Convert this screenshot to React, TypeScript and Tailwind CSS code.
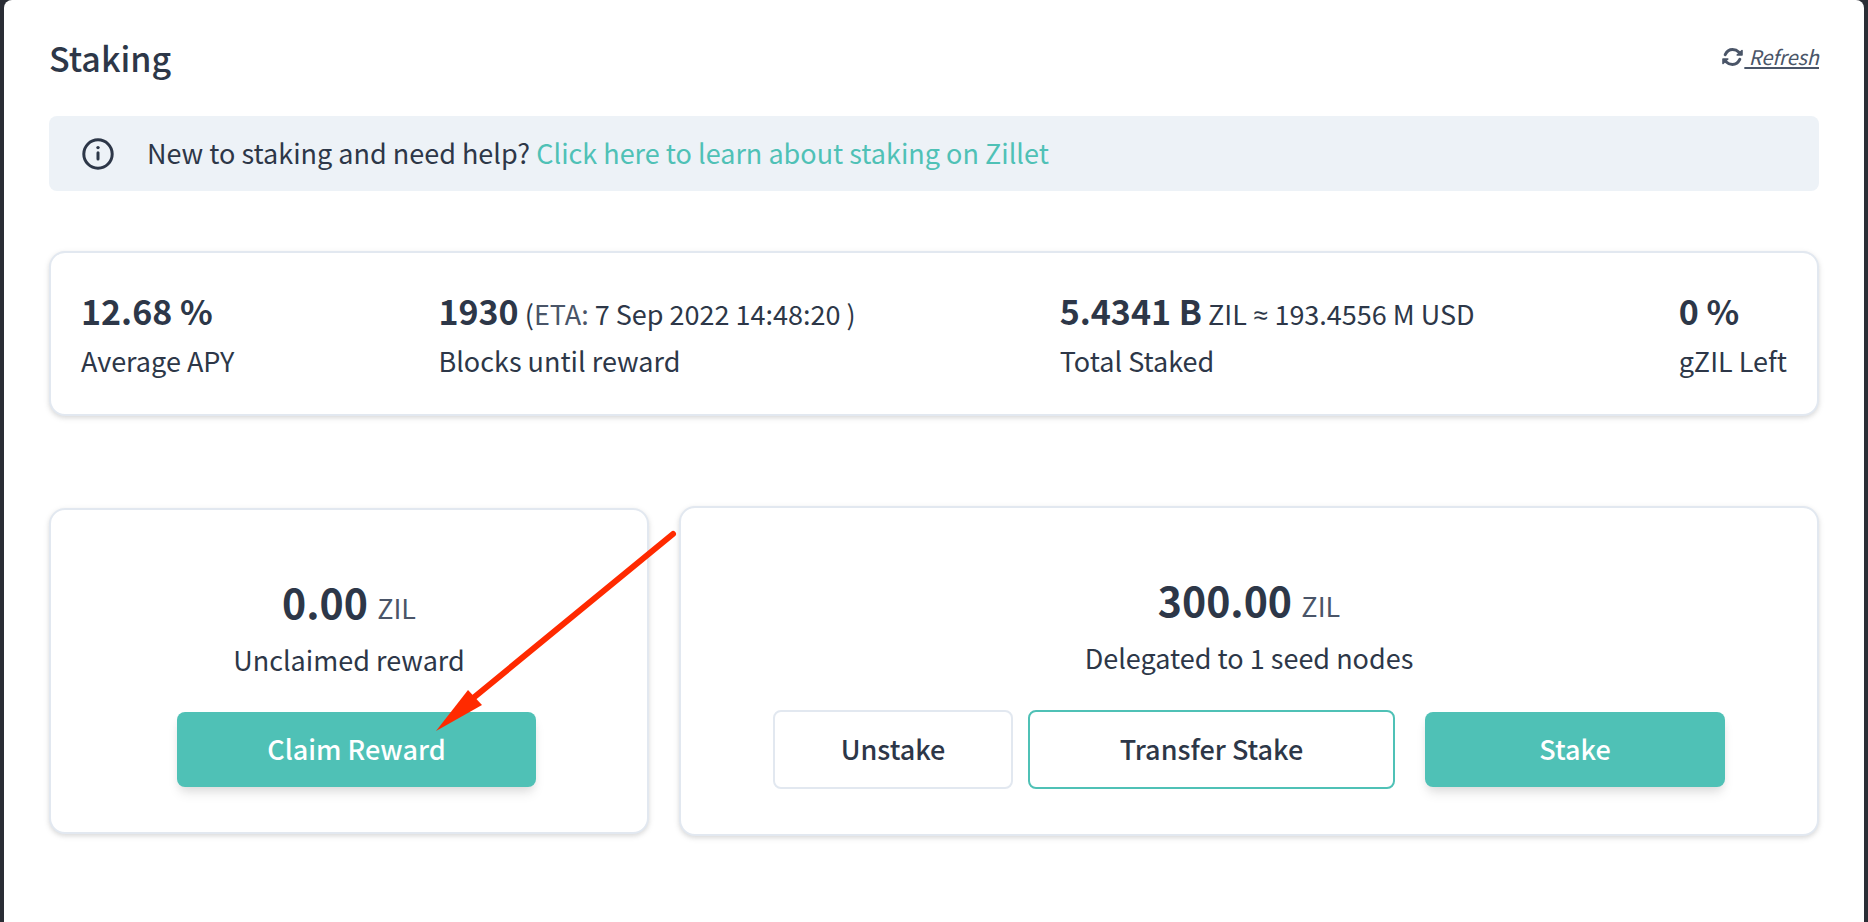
import React from 'react';

const stats = [
  { value: '12.68 %', label: 'Average APY' },
  {
    value: '1930',
    label: 'Blocks until reward',
    detail: (
      <>
        (<span className="text-[#4a5568]">ETA:</span> 7 Sep 2022 14:48:20 )
      </>
    ),
  },
  {
    value: '5.4341 B',
    label: 'Total Staked',
    detail: (
      <>
        ZIL <span className="font-['Open_Sans',sans-serif] font-medium leading-none">≈</span> 193.4556 M USD
      </>
    ),
  },
  { value: '0 %', label: 'gZIL Left' },
];

const cardClass =
  'rounded-2xl border-2 border-[#e2e8f0] bg-white shadow-[0_2px_6px_rgba(0,0,0,0.1),0_2px_4px_rgba(0,0,0,0.06)]';

const primaryButton =
  'h-[75px] rounded-lg bg-[#4fc1b6] font-medium text-white shadow-[0_8px_12px_-2px_rgba(0,0,0,0.1),0_4px_8px_-2px_rgba(0,0,0,0.06)]';

function RefreshIcon() {
  return (
    <svg viewBox="0 0 21 18" className="h-[18px] w-[21px]" fill="none" stroke="currentColor" aria-hidden="true">
      <path d="M3.2 6.6C5 2.9 8 1.5 10.6 1.5C13 1.5 15.2 2.4 17 4.2" strokeWidth="3" strokeLinecap="round" />
      <path d="M20 2.6V7H15.2Z" fill="currentColor" strokeWidth="1.6" strokeLinejoin="round" />
      <path d="M17.8 11.4C16 15.1 13 16.5 10.4 16.5C8 16.5 5.8 15.6 4 13.8" strokeWidth="3" strokeLinecap="round" />
      <path d="M1 15.4V11H5.8Z" fill="currentColor" strokeWidth="1.6" strokeLinejoin="round" />
    </svg>
  );
}

function InfoIcon() {
  return (
    <svg viewBox="0 0 32 32" className="size-8" fill="none" stroke="currentColor" aria-hidden="true">
      <circle cx="16" cy="16" r="14.2" strokeWidth="3" />
      <path d="M16 14.8v6.2" strokeWidth="3" strokeLinecap="round" />
      <circle cx="16" cy="9.6" r="1.7" fill="currentColor" stroke="none" />
    </svg>
  );
}

function Amount({ value, label }: { value: string; label: string }) {
  return (
    <div className="text-center">
      <p className="leading-[59px]">
        <span className="text-[41px] font-bold">{value} </span>
        <span className="text-[#4a5568]">ZIL</span>
      </p>
      <p className="leading-[45px]">{label}</p>
    </div>
  );
}

export default function App() {
  return (
    <div className="min-h-screen bg-[#2a2d35] px-1 font-['Noto_Sans_CJK_SC','Noto_Sans',sans-serif] text-[27px] text-[#2d3748]">
      <main className="min-h-screen rounded-t-lg bg-white px-[45px] pt-[30px]">
        {/* Header */}
        <header className="flex h-[54px] items-center justify-between">
          <h1 className="text-[34px] font-medium">Staking</h1>
          <a href="#" className="flex items-center text-[20px] italic text-[#4a5568]">
            <RefreshIcon />
            <span className="ml-px whitespace-pre underline decoration-2 underline-offset-2"> Refresh</span>
          </a>
        </header>

        {/* Help banner */}
        <div className="mt-8 flex h-[75px] items-center gap-[33px] rounded-lg bg-[#edf2f7] px-[33px]">
          <InfoIcon />
          <p>
            New to staking and need help?{' '}
            <a href="#" className="text-[#4fc1b6]">
              Click here to learn about staking on Zillet
            </a>
          </p>
        </div>

        {/* Network stats */}
        <section className={`mt-[60px] flex justify-between px-[30px] pt-[34px] pb-[31px] ${cardClass}`}>
          {stats.map((stat) => (
            <div key={stat.label}>
              <p className="leading-[48px]">
                <span className="text-[34px] font-bold">{stat.value}</span>
                {stat.detail && <> {stat.detail}</>}
              </p>
              <p className="leading-[45px]">{stat.label}</p>
            </div>
          ))}
        </section>

        <div className="relative mt-[90px] grid grid-cols-[10fr_19fr] items-center gap-[30px]">
          {/* Unclaimed reward */}
          <section className={`flex flex-col items-center pt-[62px] pb-[45px] ${cardClass}`}>
            <Amount value="0.00" label="Unclaimed reward" />
            <div className="mt-[30px] pl-[15px]">
              <button type="button" className={`w-[359px] ${primaryButton}`}>
                Claim Reward
              </button>
            </div>
          </section>

          {/* Delegated stake */}
          <section className={`flex flex-col items-center pt-[62px] pb-[45px] ${cardClass}`}>
            <Amount value="300.00" label="Delegated to 1 seed nodes" />
            <div className="mt-[30px] flex items-center">
              <button type="button" className="h-[79px] w-[240px] rounded-lg border-2 border-[#e2e8f0] font-medium">
                Unstake
              </button>
              <button type="button" className="ml-[15px] h-[79px] w-[367px] rounded-lg border-2 border-[#4fc1b6] font-medium">
                Transfer Stake
              </button>
              <button type="button" className={`ml-[30px] w-[300px] ${primaryButton}`}>
                Stake
              </button>
            </div>
          </section>

          {/* Arrow pointing at the claim button */}
          <svg
            viewBox="0 0 244 206"
            className="pointer-events-none absolute left-[385px] top-6 h-[206px] w-[244px]"
            fill="#ff2a00"
            aria-hidden="true"
          >
            <path d="M38 169L239 4" stroke="#ff2a00" strokeWidth="6" strokeLinecap="round" />
            <path d="M2 201L34 160L48 175Z" />
          </svg>
        </div>
      </main>
    </div>
  );
}
